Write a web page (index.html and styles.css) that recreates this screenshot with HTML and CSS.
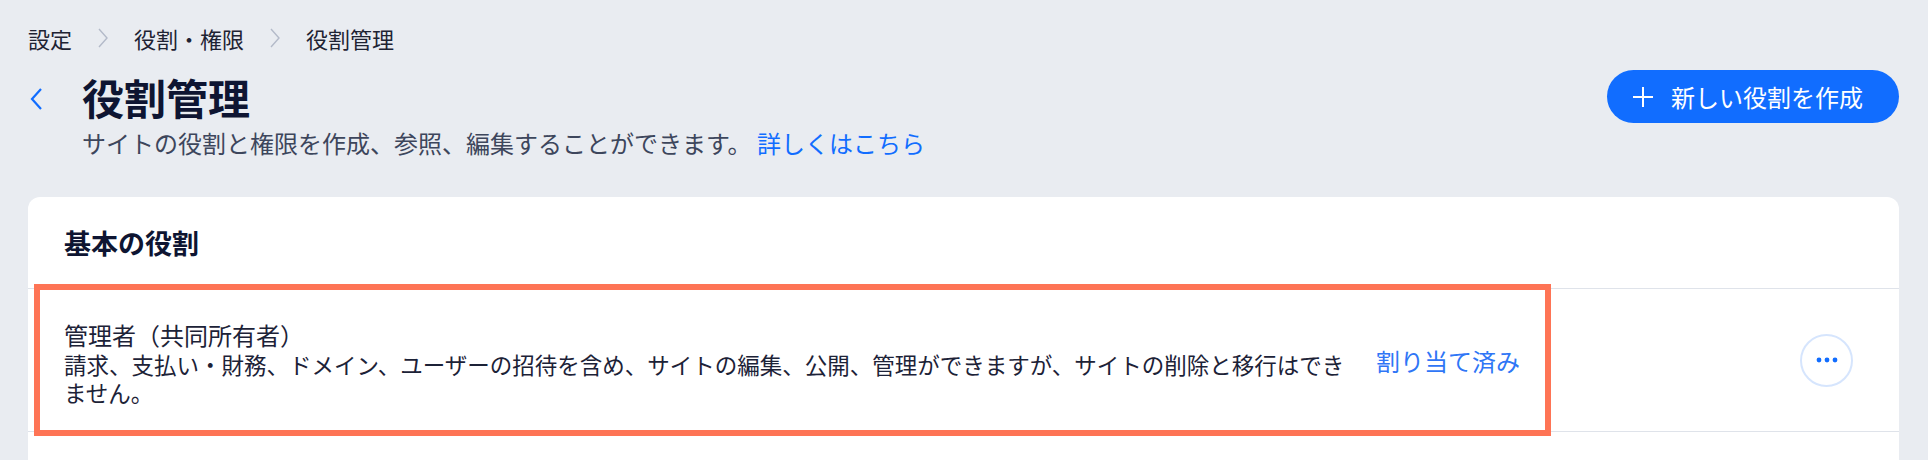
FILE: index.html
```html
<!DOCTYPE html>
<html lang="ja">
<head>
    <meta charset="UTF-8">
    <meta name="viewport" content="width=device-width, initial-scale=1.0">
    <title>役割管理</title>
    <link rel="stylesheet" href="styles.css">
</head>
<body>
    <div class="page">
        <nav class="breadcrumbs">
            <span>設定</span>
            <svg class="crumb-sep" width="10" height="20" viewBox="0 0 10 20"><polyline points="1,1 9,10 1,19" fill="none" stroke="#b3bac9" stroke-width="1.4"/></svg>
            <span>役割・権限</span>
            <svg class="crumb-sep" width="10" height="20" viewBox="0 0 10 20"><polyline points="1,1 9,10 1,19" fill="none" stroke="#b3bac9" stroke-width="1.4"/></svg>
            <span>役割管理</span>
        </nav>

        <header class="header">
            <div class="header-main">
                <div class="title-row">
                    <a class="back" href="#">
                        <svg width="14" height="22" viewBox="0 0 14 22"><polyline points="12,1 3,11 12,21" fill="none" stroke="#116dff" stroke-width="2.2"/></svg>
                    </a>
                    <h1 class="title">役割管理</h1>
                </div>
                <p class="subtitle">サイトの役割と権限を作成、参照、編集することができます。 <a href="#" class="link">詳しくはこちら</a></p>
            </div>
            <button class="create-btn">
                <svg width="20" height="20" viewBox="0 0 20 20"><line x1="10" y1="0" x2="10" y2="20" stroke="#fff" stroke-width="2"/><line x1="0" y1="10" x2="20" y2="10" stroke="#fff" stroke-width="2"/></svg>
                <span>新しい役割を作成</span>
            </button>
        </header>

        <section class="card">
            <div class="card-header">基本の役割</div>
            <div class="role-row">
                <div class="role-text">
                    <div class="role-name">管理者（共同所有者）</div>
                    <div class="role-desc">請求、支払い・財務、ドメイン、ユーザーの招待を含め、サイトの編集、公開、管理ができますが、サイトの削除と移行はできません。</div>
                </div>
                <div class="role-status">割り当て済み</div>
                <button class="more-btn">
                    <svg width="22" height="6" viewBox="0 0 22 6"><circle cx="3" cy="3" r="2.4" fill="#116dff"/><circle cx="11" cy="3" r="2.4" fill="#116dff"/><circle cx="19" cy="3" r="2.4" fill="#116dff"/></svg>
                </button>
                <div class="highlight"></div>
            </div>
            <div class="card-rest"></div>
        </section>
    </div>
</body>
</html>
```

FILE: styles.css
```css
body {
    margin: 0;
    background-color: #e9ecf1;
    font-family: "Noto Sans CJK JP", "Noto Sans", sans-serif;
    color: #1a2035;
}
.page {
    padding: 23px 29px 0 28px;
}
.breadcrumbs {
    display: flex;
    align-items: center;
    height: 30px;
    font-size: 22px;
    color: #1e2333;
}
.crumb-sep {
    margin: 0 26px;
}
.header {
    display: flex;
    justify-content: space-between;
    align-items: flex-start;
    margin-top: 18px;
}
.title-row {
    display: flex;
    align-items: center;
}
.back {
    display: flex;
    width: 54px;
    padding-left: 1px;
    box-sizing: border-box;
    margin-top: 4px;
}
.title {
    margin: 0;
    font-size: 42px;
    line-height: 52px;
    font-weight: 700;
    color: #0e1532;
}
.subtitle {
    margin: 5px 0 0 54px;
    font-size: 24px;
    line-height: 30px;
    color: #3d465c;
}
.link {
    color: #116dff;
    text-decoration: none;
}
.create-btn {
    display: flex;
    align-items: center;
    gap: 18px;
    height: 53px;
    margin-top: -1px;
    padding: 0 36px 0 26px;
    border: none;
    border-radius: 27px;
    background-color: #116dff;
    color: #fff;
    font-family: inherit;
    font-size: 24px;
    cursor: pointer;
}
.card {
    margin-top: 39px;
    background-color: #fff;
    border-radius: 12px 12px 0 0;
}
.card-header {
    display: flex;
    align-items: center;
    height: 91px;
    padding-left: 36px;
    font-size: 27px;
    font-weight: 700;
    color: #0e1532;
}
.role-row {
    position: relative;
    display: flex;
    align-items: center;
    height: 142px;
    padding: 0 46px 0 36px;
    border-top: 1px solid #dfe3ea;
    border-bottom: 1px solid #dfe3ea;
}
.role-text {
    width: 1295px;
    margin-top: 5px;
}
.role-name {
    font-size: 24px;
    line-height: 30px;
    color: #1c2237;
}
.role-desc {
    font-size: 22.5px;
    line-height: 28px;
    color: #1c2237;
}
.role-status {
    margin-left: 17px;
    font-size: 24px;
    color: #2f76f6;
}
.more-btn {
    display: flex;
    align-items: center;
    justify-content: center;
    width: 53px;
    height: 53px;
    margin-left: auto;
    padding: 0;
    border: 2px solid #d6e5fd;
    border-radius: 50%;
    background-color: #fff;
    cursor: pointer;
}
.highlight {
    position: absolute;
    left: 6px;
    top: -5px;
    width: 1517px;
    height: 152px;
    border: 6px solid #fe7455;
    box-sizing: border-box;
    pointer-events: none;
}
.card-rest {
    height: 80px;
}
```
